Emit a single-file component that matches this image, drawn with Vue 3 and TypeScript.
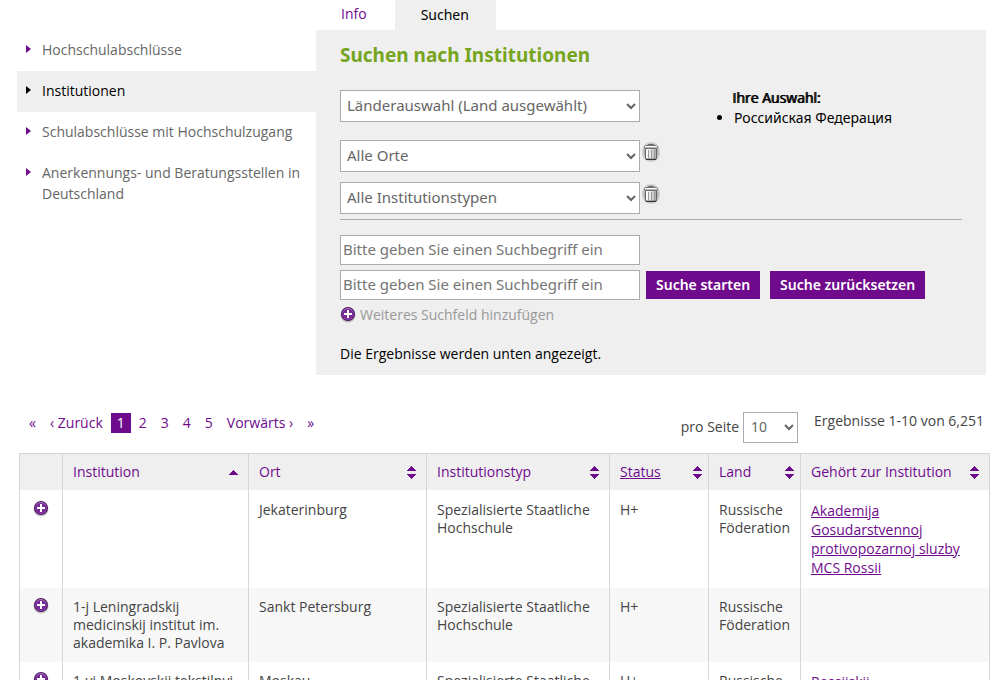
<script setup lang="ts">
import { ref } from 'vue'

interface Column {
  key: string
  label: string
  sort: 'asc' | 'both'
  underlined?: boolean
  narrow?: boolean
}

interface Row {
  institution: string
  city: string
  type: string
  status: string
  country: string
  parent: string
}

const menu = [
  { label: 'Hochschulabschlüsse', active: false },
  { label: 'Institutionen', active: true },
  { label: 'Schulabschlüsse mit Hochschulzugang', active: false },
  { label: 'Anerkennungs- und Beratungsstellen in Deutschland', active: false },
]

const filters = ['Alle Orte', 'Alle Institutionstypen']

const columns: Column[] = [
  { key: 'institution', label: 'Institution', sort: 'asc' },
  { key: 'city', label: 'Ort', sort: 'both' },
  { key: 'type', label: 'Institutionstyp', sort: 'both' },
  { key: 'status', label: 'Status', sort: 'both', underlined: true, narrow: true },
  { key: 'country', label: 'Land', sort: 'both', narrow: true },
  { key: 'parent', label: 'Gehört zur Institution', sort: 'both' },
]

const rows: Row[] = [
  {
    institution: '',
    city: 'Jekaterinburg',
    type: 'Spezialisierte Staatliche Hochschule',
    status: 'H+',
    country: 'Russische Föderation',
    parent: 'Akademija Gosudarstvennoj protivopozarnoj sluzby MCS Rossii',
  },
  {
    institution: '1-j Leningradskij medicinskij institut im. akademika I. P. Pavlova',
    city: 'Sankt Petersburg',
    type: 'Spezialisierte Staatliche Hochschule',
    status: 'H+',
    country: 'Russische Föderation',
    parent: '',
  },
  {
    institution: '1-yj Moskovskij tekstilnyj institut',
    city: 'Moskau',
    type: 'Spezialisierte Staatliche Hochschule',
    status: 'H+',
    country: 'Russische Föderation',
    parent: 'Rossijskij',
  },
]

const pages = [1, 2, 3, 4, 5]
const terms = ref<string[]>(['', ''])
</script>

<template>
  <div class="page">
    <svg class="defs" width="0" height="0" aria-hidden="true">
      <defs>
        <linearGradient id="plusFill" x1="0" y1="0" x2="0" y2="1">
          <stop offset="0" stop-color="#b58cc8" />
          <stop offset="0.4" stop-color="#7f379e" />
          <stop offset="1" stop-color="#8f3fb0" />
        </linearGradient>
        <linearGradient id="binFill" x1="0" y1="0" x2="1" y2="0">
          <stop offset="0" stop-color="#ffffff" />
          <stop offset="0.5" stop-color="#e4e4e4" />
          <stop offset="1" stop-color="#a8a8a8" />
        </linearGradient>
        <radialGradient id="binGlow">
          <stop offset="0.5" stop-color="#000" stop-opacity="0.4" />
          <stop offset="1" stop-color="#000" stop-opacity="0" />
        </radialGradient>
        <symbol id="plus" viewBox="0 0 16 17">
          <circle cx="8" cy="9" r="7.500" fill="#000" opacity="0.22" />
          <circle cx="8" cy="8" r="7" fill="#4c1463" />
          <circle cx="8" cy="8" r="6" fill="url(#plusFill)" />
          <circle cx="8" cy="8" r="5" fill="#752a95" />
          <path d="M7 4h2v3h3v2H9v3H7V9H4V7h3z" fill="#fff" />
        </symbol>
        <symbol id="bin" viewBox="0 0 18 20">
          <ellipse cx="9" cy="10" rx="10" ry="11" fill="url(#binGlow)" />
          <path d="M6.500 3.500V2.500h5v1" fill="none" stroke="#666" />
          <path d="M3.500 6.500h11v10.500h-11z" fill="url(#binFill)" stroke="#666" />
          <path d="M4 17.500h10" stroke="#333" />
          <path d="M2.500 6V4.500l1-1h11l1 1V6z" fill="#fafafa" stroke="#777" />
          <path d="M6.500 8v8M9.500 8v8M12.500 8v8" stroke="#9a9a9a" />
        </symbol>
      </defs>
    </svg>

    <div class="top">
      <nav class="sidebar">
        <ul>
          <li v-for="item in menu" :key="item.label" :class="{ active: item.active }">
            <svg width="5" height="8" viewBox="0 0 5 8"><path d="M0 0l5 4-5 4z" fill="currentColor" /></svg>
            <a href="#">{{ item.label }}</a>
          </li>
        </ul>
      </nav>

      <main class="content">
        <div class="tabs">
          <a href="#" class="tab">Info</a>
          <a href="#" class="tab current">Suchen</a>
        </div>

        <form class="panel" @submit.prevent>
          <h1>Suchen nach Institutionen</h1>
          <div class="choice">
            <div class="filters">
              <div class="filter country">
                <select aria-label="Land"><option>Länderauswahl (Land ausgewählt)</option></select>
              </div>
              <div v-for="f in filters" :key="f" class="filter">
                <select :aria-label="f"><option>{{ f }}</option></select>
                <button type="button" class="icon" aria-label="Auswahl löschen">
                  <svg width="18" height="20"><use href="#bin" /></svg>
                </button>
              </div>
            </div>
            <div class="selection">
              <strong>Ihre Auswahl:</strong>
              <ul><li>Российская Федерация</li></ul>
            </div>
          </div>
          <hr />
          <div class="terms">
            <input v-model="terms[0]" type="text" aria-label="Suchbegriff 1" placeholder="Bitte geben Sie einen Suchbegriff ein" />
            <div class="line">
              <input v-model="terms[1]" type="text" aria-label="Suchbegriff 2" placeholder="Bitte geben Sie einen Suchbegriff ein" />
              <button type="submit" class="action">Suche starten</button>
              <button type="reset" class="action">Suche zurücksetzen</button>
            </div>
          </div>
          <a href="#" class="add">
            <svg width="16" height="17"><use href="#plus" /></svg>
            <span>Weiteres Suchfeld hinzufügen</span>
          </a>
          <p>Die Ergebnisse werden unten angezeigt.</p>
        </form>
      </main>
    </div>

    <section class="results">
      <div class="toolbar">
        <nav class="pager">
          <a href="#">«</a>
          <a href="#">‹ Zurück</a>
          <a v-for="p in pages" :key="p" href="#" :class="{ current: p === 1 }">{{ p }}</a>
          <a href="#">Vorwärts ›</a>
          <a href="#">»</a>
        </nav>
        <label class="per-page">pro Seite
          <select><option>10</option></select>
        </label>
        <span class="count">Ergebnisse 1-10 von 6,251</span>
      </div>

      <table>
        <colgroup>
          <col class="c-plus" /><col class="c-inst" /><col class="c-city" /><col class="c-type" />
          <col class="c-status" /><col class="c-land" /><col class="c-parent" />
        </colgroup>
        <thead>
          <tr>
            <th></th>
            <th v-for="c in columns" :key="c.key" scope="col" :class="{ narrow: c.narrow }">
              <a href="#" class="sort">
                <span :class="{ underlined: c.underlined }">{{ c.label }}</span>
                <svg width="10" height="13" viewBox="0 0 10 13" shape-rendering="crispEdges">
                  <path v-if="c.sort === 'both'" d="M0 5L5 0l5 5zM0 8h10l-5 5z" fill="#6f0a8c" />
                  <path v-else d="M0 9l5-5 5 5z" fill="#6f0a8c" />
                </svg>
              </a>
            </th>
          </tr>
        </thead>
        <tbody>
          <tr v-for="(r, i) in rows" :key="i">
            <td class="expand">
              <button type="button" class="icon" aria-label="Details anzeigen">
                <svg width="16" height="17"><use href="#plus" /></svg>
              </button>
            </td>
            <td>{{ r.institution }}</td>
            <td>{{ r.city }}</td>
            <td>{{ r.type }}</td>
            <td>{{ r.status }}</td>
            <td>{{ r.country }}</td>
            <td class="parent"><a v-if="r.parent" href="#">{{ r.parent }}</a></td>
          </tr>
        </tbody>
      </table>
    </section>
  </div>
</template>

<style>
body {
  background: #fff;
  overflow: hidden;
}
</style>

<style scoped>
* {
  box-sizing: border-box;
}
.page {
  font: 14px/21px "Open Sans", sans-serif;
  color: #000;
}
.defs {
  position: absolute;
}
a {
  color: #6f0a8c;
  text-decoration: none;
}
ul {
  margin: 0;
  padding: 0;
  list-style: none;
}
.top {
  display: flex;
  align-items: flex-start;
  margin: 0 16px 0 17px;
}
.sidebar {
  flex: 0 0 299px;
  padding-top: 30px;
}
.sidebar li {
  display: flex;
  align-items: flex-start;
  padding: 9px 16px 11px 9px;
  gap: 11px;
  color: #6f0a8c;
}
.sidebar li svg {
  flex: none;
  margin-top: 6px;
}
.sidebar a {
  color: #666;
}
.sidebar .active {
  background: #efefef;
  color: #000;
}
.sidebar .active a {
  color: #000;
}
.content {
  flex: 1;
}
.tabs {
  display: flex;
}
.tab {
  height: 30px;
  padding: 3px 28px 0 25px;
}
.tab.current {
  padding: 4px 27px 0 26px;
  background: #efefef;
  color: #000;
  font-family: "Noto Sans", sans-serif;
}
.panel {
  background: #efefef;
  padding: 12px 24px 11px;
}
h1 {
  margin: 0 0 22px;
  font: bold 19px/26px "Noto Sans", sans-serif;
  color: #76a51d;
}
.choice {
  display: flex;
}
.filters {
  flex: 0 0 392px;
}
.filter {
  display: flex;
  align-items: flex-start;
  gap: 2px;
  margin-bottom: 10px;
}
.filter.country {
  margin-bottom: 18px;
}
select {
  font: 14px "Noto Sans", sans-serif;
  color: #666;
  background: #fff;
  border: 1px solid #aaaab0;
  border-radius: 0;
}
.filter select {
  width: 300px;
  height: 32px;
  padding: 0 2px 2px;
  font-size: 15px;
}
.icon {
  display: block;
  padding: 0;
  border: 0;
  background: none;
}
.icon svg {
  display: block;
}
.filter .icon {
  margin-top: 2px;
}
.selection {
  line-height: 20px;
  margin-top: -2px;
}
.selection strong {
  font-weight: 400;
  text-shadow: 1px 0 #000;
}
.selection ul {
  font-family: "Noto Sans", sans-serif;
  list-style: disc;
  padding-left: 2px;
}
hr {
  margin: -5px 0 15px;
  border: 0;
  border-top: 1px solid #aaa;
}
.terms {
  display: grid;
  gap: 5px;
}
.line {
  display: flex;
  align-items: center;
}
input {
  width: 300px;
  height: 30px;
  padding: 0 2px 2px;
  border: 1px solid #aaaab0;
  font: 15px "Noto Sans", sans-serif;
}
input::placeholder {
  color: #757575;
}
.action {
  height: 28px;
  padding: 0 10px 2px;
  margin-left: 6px;
  border: 0;
  background: #6f0a8c;
  color: #fff;
  font: 600 14px "Noto Sans", sans-serif;
}
.action + .action {
  margin-left: 10px;
}
.add {
  display: flex;
  align-items: center;
  gap: 4px;
  margin-top: 4px;
  color: #999;
}
.panel p {
  margin: 18px 0 0;
}
.results {
  margin: 37px 12px 0 19px;
  color: #444;
}
.toolbar {
  display: flex;
  height: 41px;
}
.pager {
  display: flex;
  margin: 1px auto 0 4px;
  height: 20px;
  line-height: 20px;
  gap: 2px;
}
.pager a {
  padding: 0 6px;
}
.pager .current {
  background: #6f0a8c;
  color: #fff;
}
.per-page {
  display: flex;
  gap: 4px;
  line-height: 29px;
}
.per-page select {
  width: 55px;
  height: 31px;
  padding: 0 2px 2px 3px;
}
.count {
  margin: -2px 6px 0 16px;
}
table {
  width: 100%;
  table-layout: fixed;
  border-collapse: separate;
  border-spacing: 0;
  line-height: 18px;
}
.c-plus { width: 43px; }
.c-inst { width: 186px; }
.c-city { width: 178px; }
.c-type { width: 183px; }
.c-status { width: 99px; }
.c-land { width: 92px; }
th {
  height: 37px;
  padding: 0 10px;
  border-top: 1px solid #d6d6d6;
  border-left: 1px solid #d6d6d6;
  background: #efefef;
  font-weight: 400;
  text-align: left;
}
th.narrow {
  padding-right: 6px;
}
th:last-child,
td:last-child {
  border-right: 1px solid #d6d6d6;
}
.sort {
  display: flex;
  align-items: center;
  justify-content: space-between;
}
.sort svg {
  flex: none;
}
.underlined {
  text-decoration: underline;
}
td {
  padding: 10px;
  border-left: 1px solid #d6d6d6;
  vertical-align: top;
}
tbody tr:first-child td {
  padding-top: 11px;
  padding-bottom: 11px;
}
tbody tr:nth-child(even) {
  background: #f7f7f7;
}
td.expand,
tbody tr:first-child td.expand {
  padding-left: 13px;
}
td.expand .icon {
  margin-top: -1px;
}
.parent {
  line-height: 19px;
}
.parent a {
  text-decoration: underline;
}
</style>
